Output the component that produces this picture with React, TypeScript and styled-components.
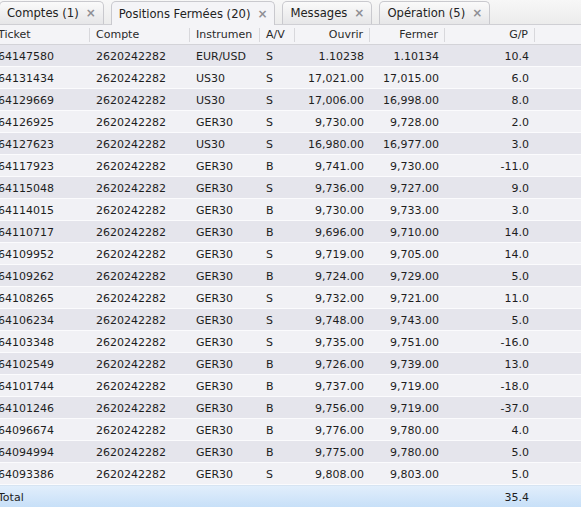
import styled, { createGlobalStyle } from "styled-components";

const GlobalStyle = createGlobalStyle`
  html, body {
    margin: 0;
    padding: 0;
    background: #f4f4f7;
    overflow: hidden;
  }
  body {
    font-family: "DejaVu Sans", Verdana, sans-serif;
    font-size: 11px;
    color: #1e1e1e;
  }
`;

const tabs = [
  { label: "Comptes (1)", active: false },
  { label: "Positions Fermées (20)", active: true },
  { label: "Messages", active: false },
  { label: "Opération (5)", active: false },
];

const columns = [
  { title: "Ticket", align: "left" },
  { title: "Compte", align: "left" },
  { title: "Instrumen", align: "left" },
  { title: "A/V", align: "left" },
  { title: "Ouvrir", align: "right" },
  { title: "Fermer", align: "right" },
  { title: "G/P", align: "right" },
];

const rows: string[][] = [
  ["64147580", "2620242282", "EUR/USD", "S", "1.10238", "1.10134", "10.4"],
  ["64131434", "2620242282", "US30", "S", "17,021.00", "17,015.00", "6.0"],
  ["64129669", "2620242282", "US30", "S", "17,006.00", "16,998.00", "8.0"],
  ["64126925", "2620242282", "GER30", "S", "9,730.00", "9,728.00", "2.0"],
  ["64127623", "2620242282", "US30", "S", "16,980.00", "16,977.00", "3.0"],
  ["64117923", "2620242282", "GER30", "B", "9,741.00", "9,730.00", "-11.0"],
  ["64115048", "2620242282", "GER30", "S", "9,736.00", "9,727.00", "9.0"],
  ["64114015", "2620242282", "GER30", "B", "9,730.00", "9,733.00", "3.0"],
  ["64110717", "2620242282", "GER30", "B", "9,696.00", "9,710.00", "14.0"],
  ["64109952", "2620242282", "GER30", "S", "9,719.00", "9,705.00", "14.0"],
  ["64109262", "2620242282", "GER30", "B", "9,724.00", "9,729.00", "5.0"],
  ["64108265", "2620242282", "GER30", "S", "9,732.00", "9,721.00", "11.0"],
  ["64106234", "2620242282", "GER30", "S", "9,748.00", "9,743.00", "5.0"],
  ["64103348", "2620242282", "GER30", "S", "9,735.00", "9,751.00", "-16.0"],
  ["64102549", "2620242282", "GER30", "B", "9,726.00", "9,739.00", "13.0"],
  ["64101744", "2620242282", "GER30", "B", "9,737.00", "9,719.00", "-18.0"],
  ["64101246", "2620242282", "GER30", "B", "9,756.00", "9,719.00", "-37.0"],
  ["64096674", "2620242282", "GER30", "B", "9,776.00", "9,780.00", "4.0"],
  ["64094994", "2620242282", "GER30", "B", "9,775.00", "9,780.00", "5.0"],
  ["64093386", "2620242282", "GER30", "S", "9,808.00", "9,803.00", "5.0"],
];

const GRID = "98px 100px 70px 35px 75px 75px 90px 1fr";

function App() {
  return (
    <Page>
      <GlobalStyle />
      <TabBar>
        {tabs.map((t) => (
          <Tab key={t.label} $active={t.active}>
            {t.label}
            <Close>×</Close>
          </Tab>
        ))}
      </TabBar>
      <Table>
        <HeaderRow>
          {columns.map((c) => (
            <HeaderCell key={c.title} $align={c.align}>
              {c.title}
            </HeaderCell>
          ))}
          <span />
        </HeaderRow>
        {rows.map((r, i) => (
          <Row key={r[0]} $odd={i % 2 === 0}>
            {r.map((v, j) => (
              <Cell key={j} $align={columns[j].align}>
                {v}
              </Cell>
            ))}
            <span />
          </Row>
        ))}
        <TotalRow>
          <Cell $align="left">Total</Cell>
          <span />
          <span />
          <span />
          <span />
          <span />
          <Cell $align="right">35.4</Cell>
          <span />
        </TotalRow>
      </Table>
    </Page>
  );
}

export default App;

const Page = styled.div`
  width: 581px;
  height: 507px;
  display: flex;
  flex-direction: column;
  overflow: hidden;
  background: #f4f4f7;
`;

const TabBar = styled.div`
  display: flex;
  align-items: flex-end;
  gap: 7px;
  height: 25px;
  flex-shrink: 0;
  margin-left: -1px;
  background: linear-gradient(#f7f7f7, #ececec);
  border-bottom: 1px solid #cfcfd4;
  box-sizing: border-box;
`;

const Tab = styled.div<{ $active: boolean }>`
  display: flex;
  align-items: center;
  gap: 7px;
  padding: 0 7px 0 7px;
  box-sizing: border-box;
  border: 1px solid #c9c9ce;
  border-bottom: none;
  border-radius: 5px 5px 0 0;
  color: #222;
  font-size: 11.6px;
  margin-bottom: ${(p) => (p.$active ? "-1px" : "0")};
  height: ${(p) => (p.$active ? "24px" : "23px")};
  background: ${(p) =>
    p.$active ? "#f4f4f7" : "linear-gradient(#fafafa, #e6e6e8)"};
`;

const Close = styled.span`
  font-size: 12px;
  font-weight: bold;
  color: #8e8e94;
  line-height: 1;
`;

const Table = styled.div`
  display: flex;
  flex-direction: column;
  margin-left: -8px;
`;

const HeaderRow = styled.div`
  display: grid;
  grid-template-columns: ${GRID};
  height: 20px;
  box-sizing: border-box;
  align-items: center;
  background: #f4f4f7;
  border-bottom: 1px solid #d3d3d8;
  color: #2a2a2a;
`;

const HeaderCell = styled.div<{ $align: string }>`
  text-align: ${(p) => p.$align};
  padding: 0 6px;
  border-right: 1px solid #d8d8dc;
  line-height: 14px;
  white-space: nowrap;
  overflow: hidden;
`;

const Row = styled.div<{ $odd: boolean }>`
  display: grid;
  grid-template-columns: ${GRID};
  height: 22px;
  box-sizing: border-box;
  align-items: center;
  padding-top: 1px;
  border-bottom: 1px solid #fbfbfd;
  background: ${(p) => (p.$odd ? "#e5e5ec" : "#f1f1f5")};
`;

const Cell = styled.div<{ $align: string }>`
  text-align: ${(p) => p.$align};
  padding: 0 6px;
  white-space: nowrap;
  overflow: hidden;
`;

const TotalRow = styled.div`
  display: grid;
  grid-template-columns: ${GRID};
  height: 22px;
  flex-shrink: 0;
  align-items: center;
  background: linear-gradient(#e1eefb, #c6dff8);
  border-top: 1px solid #d6e4f2;
`;
